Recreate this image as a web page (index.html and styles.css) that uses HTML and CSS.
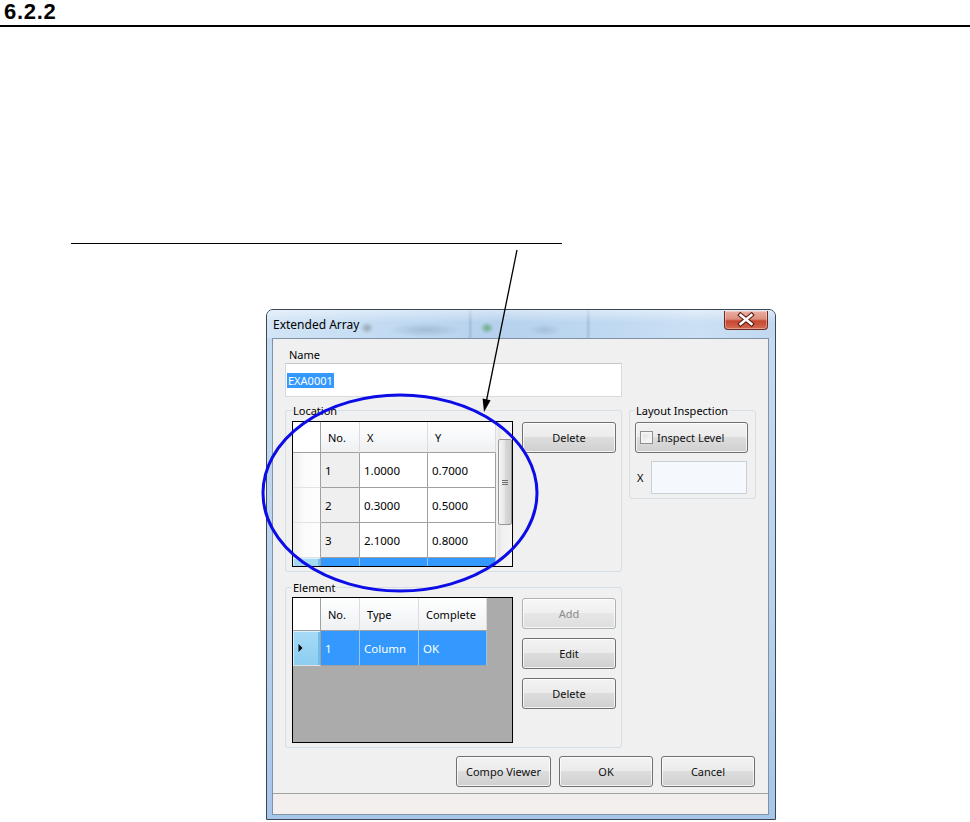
FILE: index.html
```html
<!DOCTYPE html>
<html lang="en">
<head>
    <meta charset="UTF-8">
    <meta name="viewport" content="width=device-width, initial-scale=1.0">
    <title>6.2.2 Extended Array</title>
    <link rel="stylesheet" href="styles.css">
</head>
<body>

<h2 class="section-no">6.2.2</h2>
<div class="caption-line"></div>

<div class="window">
    <div class="titlebar">
        <span class="title">Extended Array</span>
        <div class="close-btn">
            <svg width="44" height="19" viewBox="0 0 44 19">
                <path d="M16.5 5 L27.5 14 M27.5 5 L16.5 14" stroke="#5b1b12" stroke-width="4.6" stroke-linecap="square"/>
                <path d="M16.5 5 L27.5 14 M27.5 5 L16.5 14" stroke="#ffffff" stroke-width="2.4" stroke-linecap="square"/>
            </svg>
        </div>
    </div>

    <div class="client">
        <div class="client-body">
            <div class="name-field">
                <label class="field-label">Name</label>
                <div class="textbox name-box"><span class="selected-text">EXA0001</span></div>
            </div>

            <fieldset class="group location-group">
                <legend>Location</legend>
                <div class="group-row">
                    <div class="grid loc-grid">
                        <table class="dg">
                            <tr class="hdr">
                                <th class="rh w-rh"></th>
                                <th class="w-no">No.</th>
                                <th class="w-xy">X</th>
                                <th class="w-xy">Y</th>
                            </tr>
                            <tr>
                                <td class="rh"></td>
                                <td class="ro">1</td>
                                <td>1.0000</td>
                                <td>0.7000</td>
                            </tr>
                            <tr>
                                <td class="rh"></td>
                                <td class="ro">2</td>
                                <td>0.3000</td>
                                <td>0.5000</td>
                            </tr>
                            <tr>
                                <td class="rh"></td>
                                <td class="ro">3</td>
                                <td>2.1000</td>
                                <td>0.8000</td>
                            </tr>
                            <tr class="sel">
                                <td class="rh"></td>
                                <td></td>
                                <td></td>
                                <td></td>
                            </tr>
                        </table>
                        <div class="vscroll">
                            <div class="thumb"><span class="grip"></span></div>
                        </div>
                    </div>
                    <div class="side-buttons loc-buttons">
                        <button class="win-btn">Delete</button>
                    </div>
                </div>
            </fieldset>

            <fieldset class="group layout-group">
                <legend>Layout Inspection</legend>
                <button class="win-btn check-btn"><span class="checkbox"></span>Inspect Level</button>
                <div class="x-row">
                    <span class="x-label">X</span>
                    <div class="textbox x-box"></div>
                </div>
            </fieldset>

            <fieldset class="group element-group">
                <legend>Element</legend>
                <div class="group-row">
                    <div class="grid elem-grid">
                        <table class="dg">
                            <tr class="hdr">
                                <th class="rh w-rh"></th>
                                <th class="w-no">No.</th>
                                <th class="w-type">Type</th>
                                <th class="w-comp">Complete</th>
                            </tr>
                            <tr class="sel">
                                <td class="rh current">
                                    <svg width="5" height="8" viewBox="0 0 5 8"><path d="M0.5 0 L4.5 4 L0.5 8 Z" fill="#000"/></svg>
                                </td>
                                <td>1</td>
                                <td>Column</td>
                                <td>OK</td>
                            </tr>
                        </table>
                    </div>
                    <div class="side-buttons elem-buttons">
                        <button class="win-btn" disabled>Add</button>
                        <button class="win-btn">Edit</button>
                        <button class="win-btn">Delete</button>
                    </div>
                </div>
            </fieldset>

            <div class="dialog-buttons">
                <button class="win-btn">Compo Viewer</button>
                <button class="win-btn">OK</button>
                <button class="win-btn">Cancel</button>
            </div>
        </div>
        <div class="statusbar"></div>
    </div>
</div>

<!-- manual markup drawn over the screenshot -->
<svg class="annotation" width="970" height="822" viewBox="0 0 970 822">
    <ellipse cx="400" cy="493" rx="137" ry="98" fill="none" stroke="#0c0ce6" stroke-width="3"/>
    <line x1="517" y1="250" x2="486.6" y2="400" stroke="#000" stroke-width="1.3"/>
    <polygon points="484,412 490.6,400.2 482.6,398.6" fill="#000"/>
</svg>

</body>
</html>
```

FILE: styles.css
```css
* {
    box-sizing: border-box;
}
body {
    margin: 0;
    width: 970px;
    height: 822px;
    position: relative;
    overflow: hidden;
    background: #fff;
    color: #000;
    font-family: "Noto Sans", "DejaVu Sans", sans-serif;
    font-size: 11px;
}
.section-no {
    margin: 0;
    padding: 0 0 1px 4px;
    font-family: "Liberation Sans", Arial, sans-serif;
    font-weight: bold;
    font-size: 22px;
    line-height: 24px;
    letter-spacing: 0.7px;
    border-bottom: 2px solid #000;
}
.caption-line {
    margin: 216px 0 0 71px;
    width: 491px;
    height: 1px;
    background: #000;
}

/* window frame */
.window {
    margin: 65px 0 0 266px;
    width: 510px;
    border: 1px solid #3b4757;
    border-radius: 7px 7px 0 0;
    background: linear-gradient(to bottom, #c6dcf1, #b9d1eb 60%, #a6c6e9);
    padding-bottom: 4px;
}
.titlebar {
    height: 28px;
    display: flex;
    align-items: flex-start;
    border-radius: 6px 6px 0 0;
    background:
        linear-gradient(to bottom, rgba(255,255,255,.45), rgba(255,255,255,0) 45%),
        radial-gradient(ellipse 7px 6px at 100px 18px, rgba(70,70,70,.35), rgba(70,70,70,0)),
        radial-gradient(ellipse 36px 7px at 158px 20px, rgba(60,80,110,.2), rgba(60,80,110,0)),
        radial-gradient(ellipse 7px 6px at 220px 18px, rgba(30,140,40,.5), rgba(30,140,40,0)),
        radial-gradient(ellipse 16px 6px at 278px 20px, rgba(60,80,110,.16), rgba(60,80,110,0)),
        linear-gradient(to right, rgba(80,100,130,0) 201px, rgba(80,100,130,.2) 203px, rgba(80,100,130,0) 206px, rgba(80,100,130,0) 319px, rgba(80,100,130,.2) 321px, rgba(80,100,130,0) 324px),
        linear-gradient(to right, #d3e5f6, #c1daf2 25%, #b6d1ed 45%, #bed8f1 65%, #cbe0f4 85%, #c1d8ef);
}
.title {
    margin: 7px 0 0 6px;
    font-size: 12px;
    line-height: 16px;
}
.close-btn {
    margin: 1px 7px 0 auto;
    width: 44px;
    height: 19px;
    border: 1px solid #6e2a20;
    border-top: none;
    border-radius: 0 0 4px 4px;
    background: linear-gradient(to bottom, #eab0a3 0%, #dc8e7d 45%, #c6462f 55%, #d36b52 100%);
    box-shadow: inset 0 0 0 1px rgba(255,255,255,.35);
}
.close-btn svg {
    display: block;
    margin: -1px 0 0 -1px;
}

/* client area */
.client {
    margin: 0 6px 0 5px;
    border: 1px solid #7f92a8;
    background: #f0f0f0;
    display: flex;
    flex-direction: column;
}
.client-body {
    display: grid;
    grid-template-columns: 337px 127px;
    column-gap: 7px;
    align-items: start;
    padding: 9px 0 6px 12px;
}
.name-field {
    grid-column: 1;
    grid-row: 1;
}
.field-label {
    display: block;
    line-height: 14px;
    padding-left: 4px;
}
.textbox {
    background: #fff;
    border: 1px solid #d6d9de;
    border-top-color: #c4c8ce;
}
.name-box {
    margin-top: 1px;
    height: 34px;
    display: flex;
    align-items: center;
    padding-left: 1px;
}
.selected-text {
    background: #3399ff;
    color: #fff;
    line-height: 15px;
    padding: 0 1px;
}

/* group boxes */
.group {
    margin: 0;
    padding: 0 5px 4px 6px;
    min-width: 0;
    border: 1px solid #d5dfe5;
    border-radius: 3px;
}
.group legend {
    padding: 0 1px;
    line-height: 15px;
}
.location-group {
    grid-column: 1;
    grid-row: 2;
    margin-top: 6px;
}
.layout-group {
    grid-column: 2;
    grid-row: 2;
    margin-top: 6px;
    padding-left: 5px;
}
.element-group {
    grid-column: 1;
    grid-row: 3;
    margin-top: 8px;
}
.group-row {
    display: flex;
    align-items: flex-start;
    gap: 9px;
}
.side-buttons {
    display: flex;
    flex-direction: column;
    gap: 9px;
}
.loc-grid {
    margin-top: 3px;
}
.loc-buttons {
    margin-top: 4px;
}
.elem-grid {
    margin-top: 2px;
}
.elem-buttons {
    margin-top: 3px;
}

/* buttons */
.win-btn {
    width: 94px;
    height: 31px;
    padding: 0;
    font-family: inherit;
    font-size: 11px;
    color: #111;
    border: 1px solid #707070;
    border-radius: 3px;
    background: linear-gradient(to bottom, #f2f2f2 0%, #ebebeb 49%, #dddddd 50%, #cfcfcf 100%);
    box-shadow: inset 0 0 0 1px rgba(255,255,255,.75);
}
.win-btn:disabled {
    color: #8d8d8d;
    border-color: #adb2b5;
    background: linear-gradient(to bottom, #f6f6f6 0%, #efefef 49%, #e6e6e6 50%, #dedede 100%);
}
.check-btn {
    width: 113px;
    margin-top: 4px;
    display: flex;
    align-items: center;
    padding-left: 4px;
}
.checkbox {
    width: 13px;
    height: 13px;
    margin-right: 4px;
    border: 1px solid #8e8f8f;
    background: linear-gradient(135deg, #dcdcdc, #fdfdfd);
    box-shadow: inset 0 0 0 2px #f4f4f4;
}
.x-row {
    margin-top: 8px;
    display: flex;
    align-items: center;
    padding-left: 2px;
}
.x-label {
    width: 14px;
}
.x-box {
    width: 96px;
    height: 33px;
    background: #f5f8fc;
    border-color: #c9d0d8;
}
.dialog-buttons {
    grid-column: 1 / span 2;
    grid-row: 4;
    margin-top: 8px;
    padding-right: 1px;
    display: flex;
    justify-content: flex-end;
    gap: 8px;
}
.dialog-buttons .win-btn:first-child {
    width: 95px;
}
.statusbar {
    height: 21px;
    border-top: 1px solid #a2a2a2;
    background: #f2efee;
}

/* data grids */
.grid {
    display: flex;
    align-items: flex-start;
    width: 221px;
    height: 146px;
    border: 1px solid #000;
    overflow: hidden;
}
.loc-grid {
    background: #f0f0f0;
}
.elem-grid {
    background: #ababab;
}
.dg {
    flex: none;
    border-collapse: separate;
    border-spacing: 0;
    table-layout: fixed;
}
.loc-grid .dg {
    width: 203px;
}
.elem-grid .dg {
    width: 194px;
}
.w-rh { width: 28px; }
.w-no { width: 39px; }
.w-xy { width: 68px; }
.w-type { width: 59px; }
.w-comp { width: 68px; }
.dg th,
.dg td {
    padding: 0;
    text-align: left;
    font-weight: normal;
    white-space: nowrap;
    overflow: hidden;
}
.dg th {
    height: 31px;
    padding-left: 7px;
    border-right: 1px solid #dcdcdc;
    border-bottom: 1px solid #a0a0a0;
    background: linear-gradient(to bottom, #ffffff, #f7f8fa 50%, #eff0f2);
}
.elem-grid .dg th {
    height: 33px;
}
.dg td {
    height: 35px;
    padding-left: 4px;
    border-right: 1px solid #a0a0a0;
    border-bottom: 1px solid #a0a0a0;
    background: #fff;
    font-size: 11.5px;
}
.dg td.ro {
    background: #efefef;
}
.dg .rh {
    padding: 0;
    border-right: 1px solid #a0a0a0;
    border-bottom-color: #e2e2e2;
    background: linear-gradient(to right, #eeeeee, #fbfbfb 40%, #fdfdfd);
}
.dg th.rh {
    background: #fff;
    border-bottom-color: #a0a0a0;
}
.dg tr.sel td {
    background: #3399ff;
    color: #fff;
    border-right-color: #9cc3ee;
}
.dg tr.sel td.rh {
    border-right-color: #a0a0a0;
    background: linear-gradient(to bottom, #a6dbf6, #8ccdf1);
    box-shadow: inset 1px 1px 0 #d8f0fc, inset -2px 0 0 #74bce8;
}
.dg td.current svg {
    display: block;
    margin-left: 5px;
}
.vscroll {
    flex: none;
    width: 14px;
    height: 144px;
    margin-left: 2px;
    background: linear-gradient(to right, #e4e4e4, #f1f1f1 30%, #f5f5f5);
    padding-top: 17px;
}
.thumb {
    height: 86px;
    border: 1px solid #979797;
    border-radius: 2px;
    background: linear-gradient(to right, #f6f6f6, #e6e6e6 45%, #d7d7d7 55%, #cdcdcd);
    display: flex;
    align-items: center;
    justify-content: center;
}
.grip {
    width: 6px;
    height: 5px;
    border-top: 1px solid #6f6f6f;
    border-bottom: 1px solid #6f6f6f;
    background: linear-gradient(to bottom, transparent 1px, #6f6f6f 1px, #6f6f6f 2px, transparent 2px);
}

/* red ellipse and arrow markup */
.annotation {
    position: absolute;
    top: 0;
    left: 0;
    pointer-events: none;
}
```
